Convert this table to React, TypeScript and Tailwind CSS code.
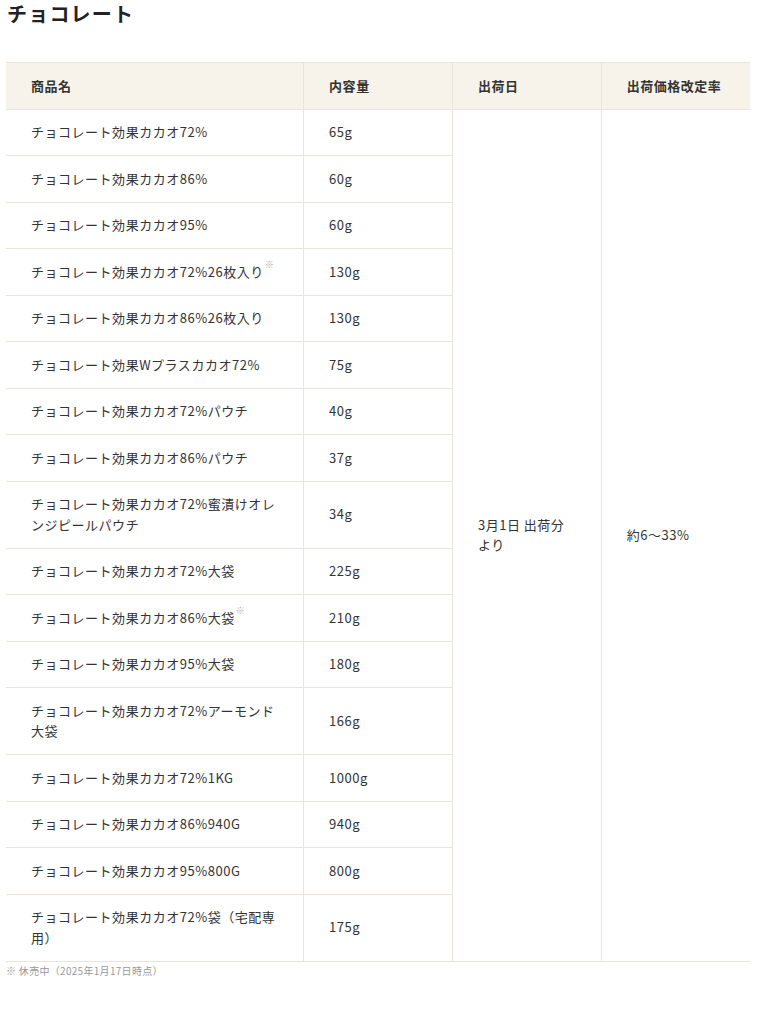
const font = "font-['Noto_Sans_CJK_JP','Noto_Sans',sans-serif]"

interface Product {
  name: string
  mark?: boolean
  weight: string
}

const products: Product[] = [
  { name: "チョコレート効果カカオ72%", weight: "65g" },
  { name: "チョコレート効果カカオ86%", weight: "60g" },
  { name: "チョコレート効果カカオ95%", weight: "60g" },
  { name: "チョコレート効果カカオ72%26枚入り", mark: true, weight: "130g" },
  { name: "チョコレート効果カカオ86%26枚入り", weight: "130g" },
  { name: "チョコレート効果Wプラスカカオ72%", weight: "75g" },
  { name: "チョコレート効果カカオ72%パウチ", weight: "40g" },
  { name: "チョコレート効果カカオ86%パウチ", weight: "37g" },
  { name: "チョコレート効果カカオ72%蜜漬けオレンジピールパウチ", weight: "34g" },
  { name: "チョコレート効果カカオ72%大袋", weight: "225g" },
  { name: "チョコレート効果カカオ86%大袋", mark: true, weight: "210g" },
  { name: "チョコレート効果カカオ95%大袋", weight: "180g" },
  { name: "チョコレート効果カカオ72%アーモンド大袋", weight: "166g" },
  { name: "チョコレート効果カカオ72%1KG", weight: "1000g" },
  { name: "チョコレート効果カカオ86%940G", weight: "940g" },
  { name: "チョコレート効果カカオ95%800G", weight: "800g" },
  { name: "チョコレート効果カカオ72%袋（宅配専用）", weight: "175g" },
]

// horizontal rules everywhere, vertical rules only between columns
const cell = "border-y border-[#e9e5db] pl-[25px] pr-[18px] py-[12.5px] leading-[20.5px] align-middle"
const divider = "border-l border-l-[#e9e5db]"

export default function App() {
  return (
    <div className={`${font} bg-white text-[#333] min-h-[1015px] pl-[6px] pr-[18px] pt-[2px]`}>
      <h2 className="text-[20px] font-bold leading-[24px] tracking-[0.06em] text-[#222] pl-[1px]">チョコレート</h2>

      <table className="mt-[36px] w-full border-collapse table-fixed text-[13px] tracking-[0.04em]">
        <colgroup>
          <col className="w-[40%]" />
          <col className="w-[20%]" />
          <col className="w-[20%]" />
          <col className="w-[20%]" />
        </colgroup>
        <thead>
          <tr className="bg-[#f7f3ea]">
            <th className={`${cell} text-left font-bold`}>商品名</th>
            <th className={`${cell} ${divider} text-left font-bold`}>内容量</th>
            <th className={`${cell} ${divider} text-left font-bold`}>出荷日</th>
            <th className={`${cell} ${divider} text-left font-bold whitespace-nowrap`}>出荷価格改定率</th>
          </tr>
        </thead>
        <tbody>
          {products.map((p, i) => (
            <tr key={i}>
              <td className={cell}>
                {p.name}
                {p.mark && <sup className="text-[9px] text-[#aaa] align-top relative top-[3px] ml-[1px]">※</sup>}
              </td>
              <td className={`${cell} ${divider}`}>{p.weight}</td>
              {i === 0 && (
                <>
                  <td rowSpan={products.length} className={`${cell} ${divider} pr-[28px]`}>3月1日 出荷分より</td>
                  <td rowSpan={products.length} className={`${cell} ${divider}`}>約6～33%</td>
                </>
              )}
            </tr>
          ))}
        </tbody>
      </table>

      <p className="mt-[2px] text-[10px] leading-[14px] text-[#999] tracking-[0.03em]">※ 休売中（2025年1月17日時点）</p>
    </div>
  )
}
